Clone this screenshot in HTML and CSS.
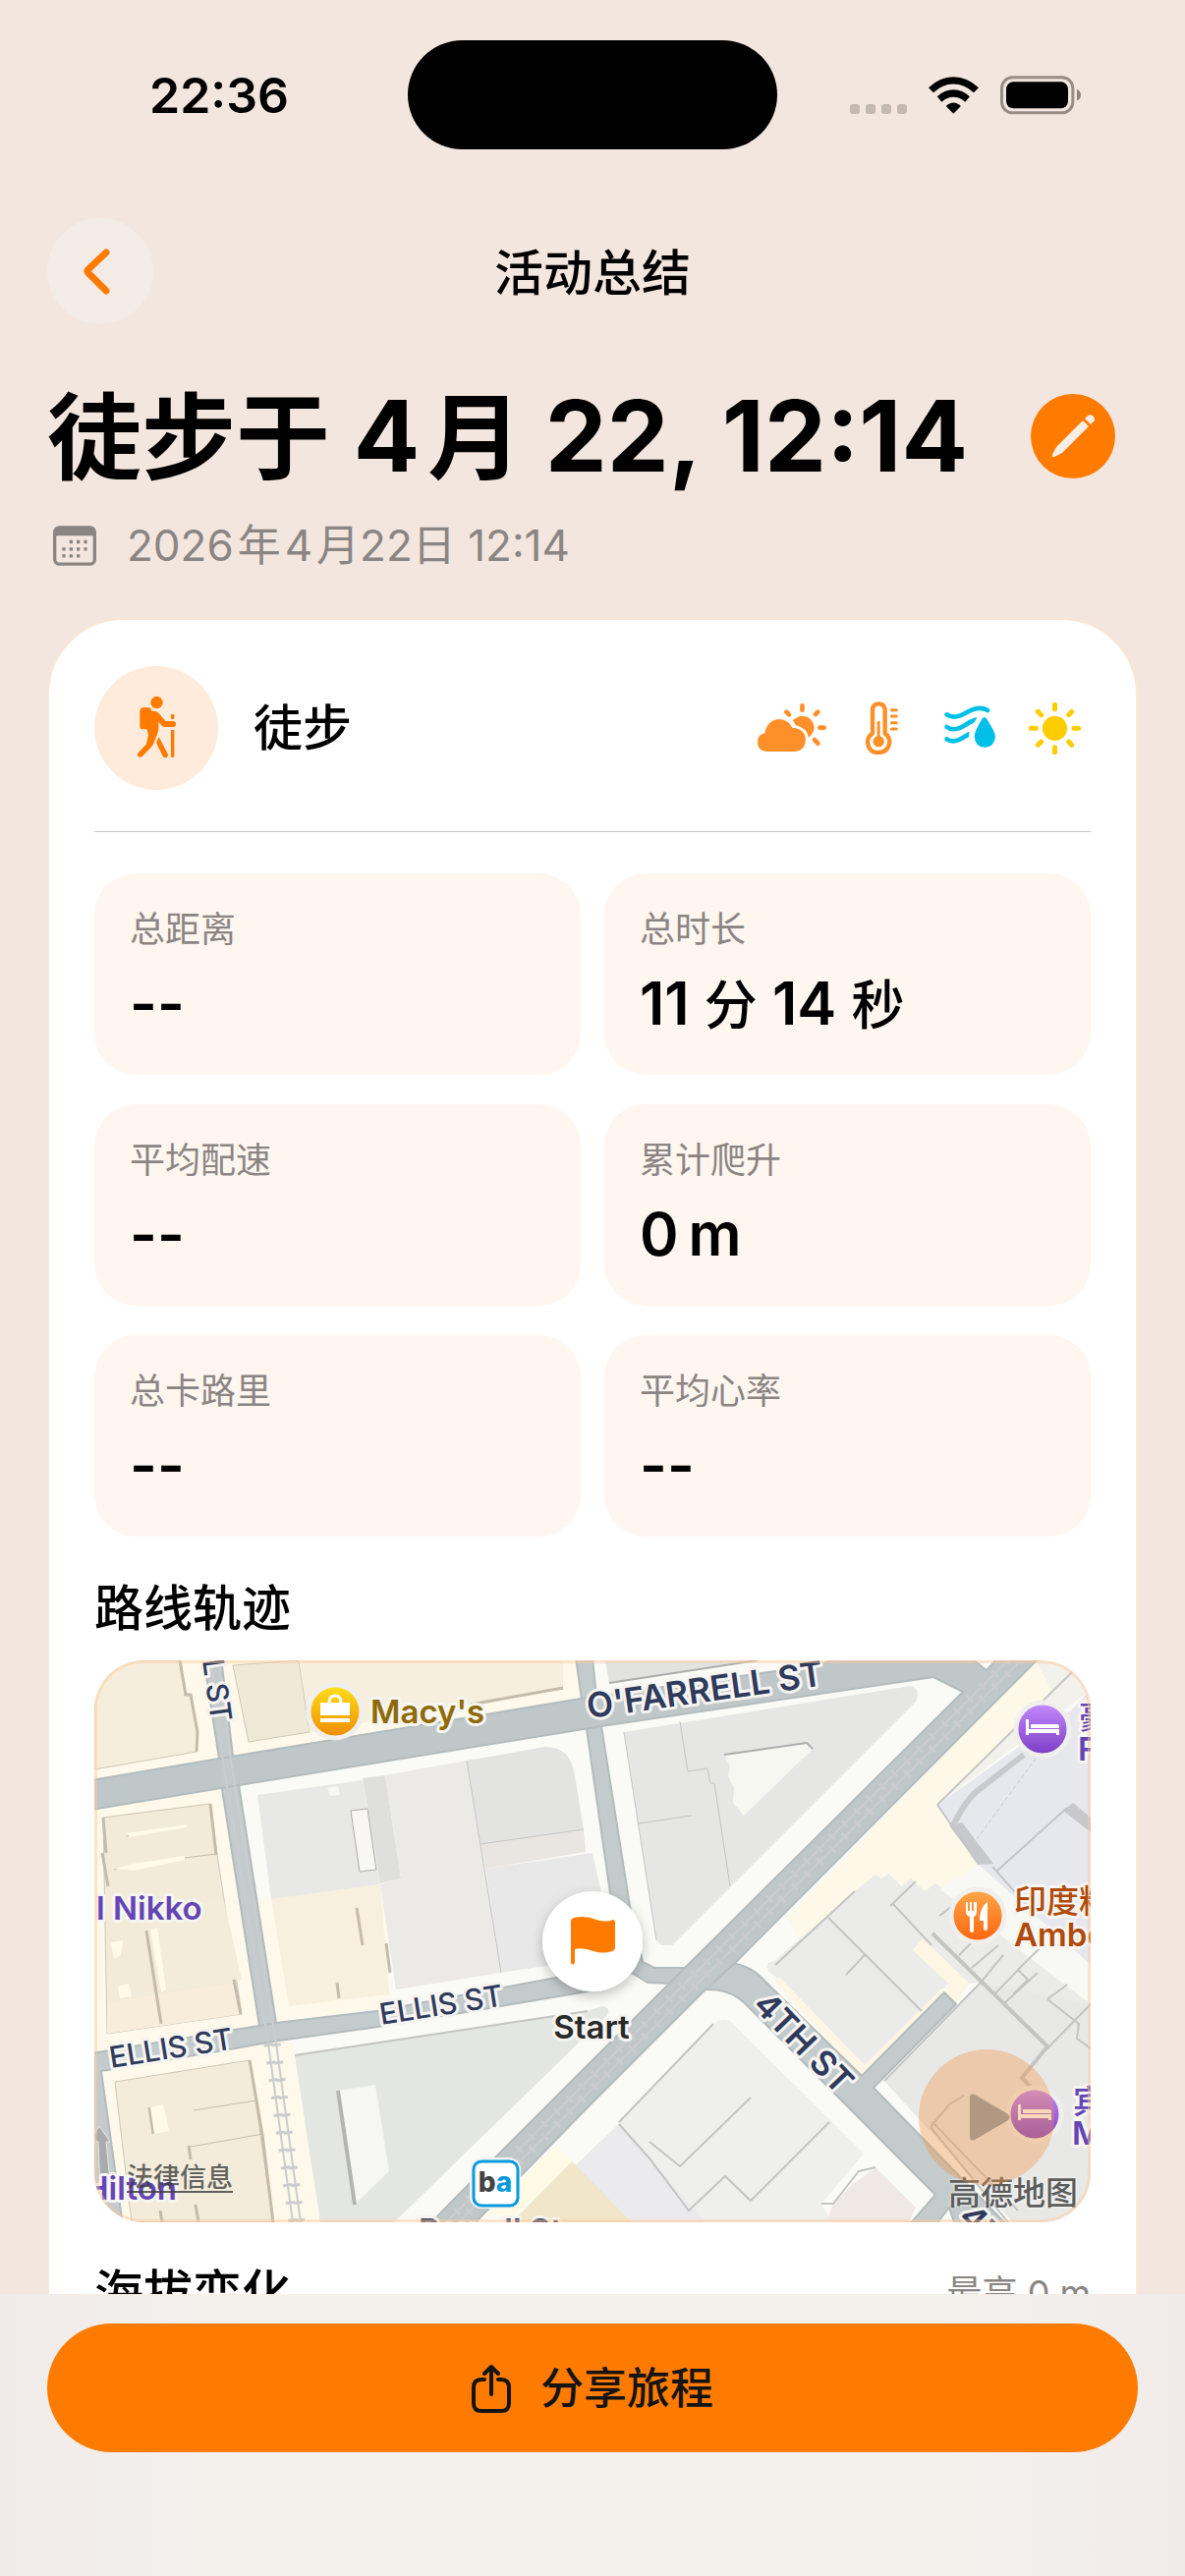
FILE: index.html
```html
<!DOCTYPE html>
<html lang="zh-CN">
<head>
<meta charset="utf-8">
<meta name="viewport" content="width=device-width, initial-scale=1">
<title>活动总结</title>
<link rel="stylesheet" href="styles.css">
</head>
<body>
<div class="app">
  <div class="status">
    <span class="status-time">22:36</span>
    <span class="island"></span>
    <span class="status-icons">
      <svg width="58" height="38" viewBox="0 0 58 38" fill="#c3b9b1"><rect y="28" width="10" height="10" rx="3"/><rect x="16" y="28" width="10" height="10" rx="3"/><rect x="32" y="28" width="10" height="10" rx="3"/><rect x="48" y="28" width="10" height="10" rx="3"/></svg>
      <svg width="51" height="38" viewBox="316 56 152 112"><path d="M316 89Q350 56 391.500 56T468 89L453 104Q425 78 391.500 78T331 104Z"/><path d="M342 116Q364 95 391.500 95T441 116L427 132Q411 117 391.500 117T356 132Z"/><path d="M369 145Q379 134 391.500 134T414 145L391.500 168Z"/></svg>
      <svg width="82" height="40" viewBox="534 53 246 120"><rect x="538.500" y="58.500" width="217" height="108" rx="33" fill="none" stroke="#978c86" stroke-width="9"/><rect x="552" y="72" width="189" height="81" rx="22"/><path d="M768 94Q780 100 780 112T768 129Z" fill="#8d837d"/></svg>
    </span>
  </div>

  <header class="nav">
    <button class="back" aria-label="返回"><svg width="108" height="108" viewBox="0 0 108 108" fill="none" stroke="#ff7b00" stroke-width="7" stroke-linecap="round" stroke-linejoin="round"><path d="M60 35L42 52Q40 54 42 56L60 74"/></svg></button>
    <h2 class="nav-title">活动总结</h2>
  </header>

  <main class="content">
    <div class="title-row">
      <h1><span class="han">徒步于</span> 4&#8202;<span class="han">月</span> 22, 12:14</h1>
      <button class="edit" aria-label="编辑"><svg width="86" height="86" viewBox="0 0 86 86" fill="#fbeee4"><path d="M53 27L59 33L33 59Q31 61 24 64Q21 65 22 62Q25 55 27 53Z"/><path d="M55 25L58 22Q61 20 64 23Q66 26 64 28L61 31Z"/></svg></button>
    </div>
    <div class="date-row">
      <svg width="44" height="41" viewBox="42 463 132 122"><rect x="47" y="468" width="122" height="112" rx="15" fill="none" stroke="#8a8583" stroke-width="10"/><path d="M44 497V484Q44 465 62 465H154Q172 465 172 484V497Q168 493 160 493H56Q48 493 44 497Z" fill="#8a8583"/><g fill="#8a8583"><path d="M92 507h10v10h-10zM114 507h10v10h-10zM136 507h10v10h-10zM70 529h10v10h-10zM92 529h10v10h-10zM114 529h10v10h-10zM136 529h10v10h-10zM70 550h10v10h-10zM92 550h10v10h-10zM114 550h10v10h-10z"/></g></svg>
      <time datetime="2026-04-22T12:14">2026&#8202;年&#8202;4&#8202;月22日 12:14</time>
    </div>

    <section class="card">
      <div class="card-head">
        <span class="avatar"><svg width="126" height="126" viewBox="18 24 378 378" fill="#ff7b00"><circle cx="208.500" cy="135" r="18.500"/><path d="M157 163Q157 150 170 150H182Q190 150 193 158V217H166Q157 217 157 208Z"/><path d="M178 161H200Q208 161 214 167L236 192H259Q267 193 267 201T259 210H234Q229 210 225 206L214 195V217Q213 226 208 238L198 262Q197 266 193 270L164 300Q158 305 152 300T152 289L177 262L183 234L178 215Z"/><path d="M215 240L242 292Q245 300 238 303T227 299L207 258Z"/><rect x="252" y="171" width="10" height="15" rx="4"/><path d="M252 219h10v80q-1 4-5 4t-5-4z"/></svg></span>
        <h3 class="sport">徒步</h3>
        <div class="weather">
          <svg width="72" height="54" viewBox="93 102 216 162" fill="#ff8f28"><path d="M121 255Q93 253 93 226Q94 202 115 199Q122 158 160 156Q188 158 199 182Q236 184 240 217Q239 252 208 255Z"/><path d="M200 160Q214 146 231 146Q262 149 266 181Q265 200 249 212Q244 183 209 174Q205 165 200 160Z"/><g stroke="#ff8f28" stroke-width="14" stroke-linecap="round"><path d="M229.500 115v13M181 134l8 8M277 134l-7 7M283 182h13M267 219l10 11"/></g></svg>
          <svg width="50" height="54" viewBox="411 102 150 162" fill="none" stroke="#ff8f28"><path d="M444 200V126Q446 109 462.500 109T482 126V200Q496 209 496 226Q493 257 462.500 258T429 226Q429 209 444 200Z" stroke-width="13" stroke-linejoin="round"/><circle cx="462.500" cy="224" r="17" fill="#ff8f28" stroke="none"/><path d="M462.500 166v50" stroke-width="9" stroke-linecap="round"/><path d="M502 128h15M502 147h15M502 167h15M502 186h15" stroke-width="9" stroke-linecap="round"/></svg>
          <svg width="52" height="54" viewBox="663 102 156 162" fill="none" stroke="#00c0e8" stroke-width="14" stroke-linecap="round"><path d="M671 142Q694 158 731 136T795 129"/><path d="M671 180Q692 196 727 174Q742 163 758 158"/><path d="M671 217Q692 232 726 209L738 202"/><path d="M785 138C776 142 744 186 744 209Q745 244 770 252" stroke="#fff" stroke-width="12"/><path d="M786 150Q780 150 776 159Q755 194 755 209Q757 241 787 242Q817 240 819 209Q818 194 795 159Q791 150 786 150Z" fill="#00c0e8" stroke="none"/></svg>
          <svg width="54" height="54" viewBox="921 102 162 162"><circle cx="1000.500" cy="184" r="38" fill="#ffcc00"/><path d="M1000.500 112v13M1000.500 242v15M928 184h15M1059 184h14M949 133l10 10M1052 133l-9 10M949 235l10-10M1052 235l-9-10" stroke="#ffcc00" stroke-width="15" stroke-linecap="round"/></svg>
        </div>
      </div>

      <dl class="stats">
        <div class="stat"><dt>总距离</dt><dd>--</dd></div>
        <div class="stat"><dt>总时长</dt><dd>11 <span class="unit">分</span> 14 <span class="unit">秒</span></dd></div>
        <div class="stat"><dt>平均配速</dt><dd>--</dd></div>
        <div class="stat"><dt>累计爬升</dt><dd>0&#8201;m</dd></div>
        <div class="stat"><dt>总卡路里</dt><dd>--</dd></div>
        <div class="stat"><dt>平均心率</dt><dd>--</dd></div>
      </dl>

      <h3 class="section-title">路线轨迹</h3>
      <div class="map">
        <svg class="map-canvas" viewBox="0 0 1014 572" preserveAspectRatio="xMidYMid slice" role="img" aria-label="路线地图">
          <defs>
            <linearGradient id="gold" x2="0" y2="1"><stop stop-color="#ffe01a"/><stop offset="1" stop-color="#ef8a00"/></linearGradient>
            <linearGradient id="violet" x2="0" y2="1"><stop stop-color="#c58bff"/><stop offset="1" stop-color="#7a3cc4"/></linearGradient>
            <linearGradient id="tangerine" x2="0" y2="1"><stop stop-color="#ffa84a"/><stop offset="1" stop-color="#fc6410"/></linearGradient>
            <filter id="lift" x="-50%" y="-50%" width="200%" height="200%"><feDropShadow dx="0" dy="4" stdDeviation="6" flood-opacity=".25"/></filter>
            <g id="bed" fill="#fff"><path d="M-17-9h3v14h-3zM-12-4h27q2 0 2 3v1h-29zM-17 1h34v6h-3v-2h-28v2h-3z"/></g>
          </defs>
          <rect width="1014" height="572" fill="#fafaf6"/>
          <!-- cream pavements -->
          <g fill="#fef9ea">
            <path d="M0 0H111L127 100L0 121ZM129 0H490L496 40L141 97ZM0 152L130 131L168 372L0 400ZM7 418L188 387L202 388L230 572H29ZM164 245L296 226L303 352L185 369Z"/>
            <path d="M957 2L975 30L858 147L900 208L861 233L840 240L808 218L774 235L718 285L705 262Z" fill="#fdf8e7"/>
          </g>
          <!-- buildings -->
          <g fill="#f5eedd" stroke="#cfc6b6" stroke-width="1">
            <path d="M0 0H87L93 35H98L105 73L104 93L0 111Z"/>
            <path d="M141 5L208 0L219 73L157 83Z" fill="#efe9d8"/>
            <path d="M210 0H477V28L277 63L219 73Z" fill="#f6efe0" stroke="none"/>
            <path d="M9 160L118 146L125 198L150 360L13 380Z" fill="#f3ebd9"/>
            <path d="M58 254L132 245L150 325L67 336Z" fill="#f4ecda" stroke="none"/>
            <path d="M13 348L142 328L150 360L13 380Z" fill="#f8ecdb" stroke="none"/>
            <path d="M21 429L158 407L182 572H38Z" fill="#f3ecdb"/>
            <path d="M180 243L291 228L300 340L198 352Z" fill="#f8f0df" stroke="none"/>
          </g>
          <g fill="none" stroke="#c4bbab" stroke-width="3">
            <path d="M87 0L93 35H98L105 73L104 93M383 45L477 28M9 160L12 196M118 146L124 198M8 196L14 230M53 275L68 370M142 325L149 360M267 252L273 290M297 288L301 318M247 328L249 344M158 407L171 483L182 572M56 455L60 482M96 494L98 508M103 554L106 572M67 560L69 572"/>
            <path d="M32 179L92 169M20 213L40 208L92 201L124 197M98 495L172 482M101 458L165 448" stroke-width="1"/>
          </g>
          <g fill="#fffaea"><path d="M20 212L40 207L92 199V203L40 214ZM33 176L94 167V170L36 180ZM17 287L29 285L27 300L20 304ZM24 332L35 329L38 342L26 344ZM57 455L70 452L76 479L61 482ZM57 274L64 272L73 335L68 338Z"/></g>
          <g fill="#e8e8e6">
            <path d="M166 137L273 122L291 228L180 243Z"/>
            <path d="M273 120L296 117L312 222L291 227Z" fill="#dfdfde"/>
            <path d="M261 153L278 151L287 213L270 215Z" fill="#f8f7f3" stroke="#aaa" stroke-width="1"/>
            <path d="M237 130L248 128L250 137L240 138Z" fill="#f8f7f3"/>
            <path d="M296 117L379 102L414 318L307 335L291 228L312 222Z" fill="#ebeae7"/>
            <path d="M379 102L459 88Q485 88 489 117L498 172L393 187Z" fill="#e3e3e2"/>
            <path d="M393 187L498 172L500 195L398 212Z" fill="#e9e5e1"/>
            <path d="M398 212L507 196L530 300L414 318Z" fill="#e8e8e8"/>
            <path d="M520 0H675L524 23Z" fill="#e2e2e0"/>
            <path d="M539 73L831 26Q842 30 836 42L588 290H577L572 285Z" fill="#e6e6e4"/>
            <path d="M641 96L725 84L731 90L661 158L650 145L651 130L645 118L647 108Z" fill="#f7f7f2"/>
            <path d="M204 402L502 357L516 352Q528 354 520 363L305 572H230Z" fill="#e4e6e1"/>
            <path d="M248 438L286 432L300 520L265 554Z" fill="#f6f6f3"/>
            <path d="M686 317Q682 308 692 306L774 235L795 218L801 222L808 217L822 230L831 222L845 235L856 227L902 328L868 330L784 412L693 322Z" fill="#ebebea"/>
            <path d="M804 428L902 328L845 280L856 227L1014 340V572H935Z" fill="#ebebea"/>
            <path d="M804 428L902 328L1014 350V572H935Z" fill="#e8e9e7"/>
            <path d="M534 470L630 370Q636 364 647 367L783 502L740 553L750 572H547L504 530Z" fill="#efefed"/>
            <path d="M504 500L534 472L565 507L622 572H547L504 530L490 514Z" fill="#ebebee"/>
            <path d="M486 510L547 572H425Z" fill="#f1e5ca"/>
            <path d="M470 493L486 510L430 565L400 565Z" fill="#fefae6"/>
            <path d="M795 516L836 557L829 572H745L752 553L770 535Z" fill="#f0e8e5"/>
          </g>
          <!-- shopping centre -->
          <path d="M858 147L995 50L1014 30V310L900 208Z" fill="#e6e8ed"/>
          <path d="M957 0H1014V30L860 145L975 30Z" fill="#f2f1eb"/>
          <path d="M858 147L995 12" stroke="#c6c6c6" stroke-width="2" fill="none"/>
          <path d="M870 168L883 165L915 207L900 208ZM986 153L996 145L1014 160V175Z" fill="#c6c8cb"/>
          <path d="M874 168Q888 140 901 131L946 96" fill="none" stroke="#c9cacd" stroke-width="6"/>
          <path d="M898 182L958 100" stroke="#c6c8cc" stroke-dasharray="4 3"/>
          <path d="M918 215L990 150M914 210L960 262M858 147L900 208" stroke="#c4c5c8" stroke-width="2"/>
          <path d="M900 208L1014 310V350L861 233Z" fill="#f8f8f4"/>
          <path d="M833 295L843 283L890 328L877 348L865 338L870 330Z" fill="#fcf6e2"/>
          <path d="M693 328L781 423L865 338L862 334L784 412L697 322Z" fill="#fdf6e4"/>
          <!-- building outlines -->
          <g fill="none" stroke="#c4c4c2" stroke-width="1">
            <path d="M524 23L675 0M641 96L725 84L731 90" stroke="#adadab" stroke-width="2"/>
            <path d="M596 62L604 113L624 110L627 125H631L647 230M554 166L608 158M393 187L498 172M379 102L414 318M539 73L572 285"/>
            <path d="M248 438L265 554" stroke="#b4b5b1" stroke-width="4"/>
            <path d="M204 402L502 357M534 470L630 370M804 428L902 328M693 310L774 235M747 262L842 357M784 300L765 320M810 250L836 225" stroke-width="2"/>
            <path d="M853 278L970 393L944 425L956 437" stroke-width="4"/>
            <path d="M902 328L925 300M915 341L945 310M925 350L960 318M880 300L905 275M893 313L920 290M935 340L950 325L940 315L965 290M970 345L990 330M965 400L1014 350M970 345L1002 370L1000 385L1014 395M860 260L880 245M812 247L852 290" stroke-width="2"/>
            <path d="M534 472L565 507L605 560L642 525L668 550L748 470M565 490L596 515L668 445" stroke-width="2"/>
            <path d="M851 475L870 452L885 443M851 475L930 572M853 470L940 560M740 553L752 553L778 520L795 516" stroke-width="2"/>
          </g>
          <!-- streets -->
          <g fill="#c4cbcd" stroke="#b2bcbd" stroke-width="2" stroke-linejoin="round">
            <path d="M111 -3H129L141 97L147 127L185 369L168 372L130 131L127 100Z"/>
            <path d="M490 -3H507L511 37L516 67L545 250L558 307L570 313H602L590 329L563 328L547 318L502 337L289 373L188 387L143 395L7 418L29 575H5L-3 530V400L168 372L185 369L287 357L470 323L525 237L501 70L496 40Z"/>
            <path d="M602 312L647 308Q668 310 683 327L781 423L865 338L877 350L793 435L929 575H876L870 557L856 575H829L856 544L661 348Q645 334 622 335L590 329Z"/>
            <path d="M-3 122L127 100L495 39L736 5L760 -3H891L908 10L920 -3H962L652 308L622 335L504 453L385 575H340L411 503L602 312L884 32L854 17L516 67L147 127L-3 152Z" fill="#bfc7c9"/>
            <path d="M128 101L140 99L146 126L131 129ZM600 315L646 309L624 334L592 328Z" stroke="none" fill="#c1c9cb"/>
          </g>
          <!-- tram lines -->
          <g fill="none" stroke="#cbcccd" stroke-width="2">
            <path d="M930 0L360 570M943 0L373 570M119 0L131 103L177 390L202 572M127 0L139 103L185 390L210 572"/>
            <path d="M930 0L360 570M943 0L373 570M177 390L202 572M185 390L210 572" stroke-width="9" stroke-dasharray="3 15"/>
          </g>
          <path d="M5 474L16 490H12L16 530L6 540L4 490H0V482Z" fill="#a9abac" stroke="#e6e6e6"/>
          <!-- street names -->
          <g class="street">
            <text class="street-lg" transform="translate(503 59) rotate(-8)">O'FARRELL ST</text>
            <text transform="translate(17 415) rotate(-9)">ELLIS ST</text>
            <text transform="translate(292 371) rotate(-9)">ELLIS ST</text>
            <text transform="translate(110 0) rotate(82)">L ST</text>
            <text class="street-lg" transform="translate(669 352) rotate(46)">4TH ST</text>
            <text class="street-lg" transform="translate(878 568) rotate(46)">4TH ST</text>
          </g>
          <!-- places -->
          <g class="place">
            <text x="281" y="64" fill="#8f6a08">Macy's</text>
            <text x="2" y="264" fill="#6445b4">l Nikko</text>
            <text x="84" y="549" fill="#6445b4" text-anchor="end">Hilton</text>
            <text class="place-han" x="1002" y="70" fill="#6445b4">豪</text>
            <text x="1001" y="102" fill="#6445b4">F</text>
            <text class="place-han" x="996" y="461" fill="#6445b4">宾</text>
            <text x="995" y="493" fill="#6445b4">M</text>
            <text class="place-han" x="936" y="257" fill="#b04a0c">印度料理</text>
            <text x="936" y="291" fill="#b04a0c">Amber</text>
            <text x="330" y="592" fill="#2f3a5c">Powell St</text>
            <text x="506" y="385" fill="#2a2a2a" text-anchor="middle">Start</text>
          </g>
          <g stroke="#f1efeb" stroke-width="5">
            <circle cx="245" cy="52" r="27" fill="url(#gold)"/>
            <circle cx="965" cy="70" r="27" fill="url(#violet)"/>
            <circle cx="957" cy="462" r="27" fill="url(#violet)"/>
            <circle cx="899" cy="260" r="27" fill="url(#tangerine)"/>
          </g>
          <g fill="#fff"><path d="M230 43H260V56H230ZM230 59H260V63H230Z"/><path d="M239 43Q239 36 245 36T251 43" fill="none" stroke="#fff" stroke-width="3"/></g>
          <use href="#bed" x="965" y="69"/><use href="#bed" x="957" y="461"/>
          <path d="M887 246h2v9h2v-9h2v9h2v-9h3v10q0 4-3 5v14q0 2-2 2t-2-2v-14q-4-1-4-5zM909 246v27q0 2-2 2t-2-2v-8h-4q0-14 8-19z" fill="#fff"/>
          <rect x="382" y="506" width="52" height="52" rx="12" fill="#f4f4f2"/>
          <rect x="386" y="510" width="45" height="45" rx="8" fill="#fff" stroke="#0a9adc" stroke-width="3"/>
          <!-- station badge -->
          <text class="bart" x="408" y="541" text-anchor="middle"><tspan fill="#444">b</tspan><tspan fill="#0a9adc">a</tspan></text>
          <circle cx="507" cy="286" r="51" fill="#fff" filter="url(#lift)"/>
          <path d="M485 265Q485 263 488 262Q500 259 511 264Q521 267 528 264Q530 264 530 267V292Q530 295 527 296Q518 299 508 296Q497 292 489 294V308Q487 311 485 308Z" fill="#ff7b00"/>
        </svg>
        <a class="legal" href="#legal">法律信息</a>
        <span class="provider">高德地图</span>
        <button class="play" aria-label="播放轨迹"><svg width="138" height="138" viewBox="0 0 138 138"><path d="M52 49Q52 44 57 46L91 66Q94 69 91 72L57 92Q52 94 52 89Z" fill="#5f564c" fill-opacity=".42"/></svg></button>
      </div>

      <div class="section-row">
        <h3 class="section-title">海拔变化</h3>
        <span class="peak">最高 0 m</span>
      </div>
    </section>
  </main>

  <footer class="dock">
    <button class="share">
      <svg width="40" height="50" viewBox="0 0 40 50" fill="none" stroke="#141414" stroke-width="4" stroke-linecap="round" stroke-linejoin="round"><path d="M13 16H10Q2 16 2 24V40Q2 48 10 48H30Q38 48 38 40V24Q38 16 30 16H27M20 31V3M13 10L20 3L27 10"/></svg>
      分享旅程
    </button>
  </footer>
</div>
</body>
</html>
```
FILE: styles.css
```css
* { box-sizing: border-box; }

body {
  margin: 0;
  background: #f3e6de;
  color: #000;
  font-family: Inter, "Noto Sans CJK SC", sans-serif;
}

h1, h2, h3, dl, dd { margin: 0; }

button {
  padding: 0;
  border: 0;
  font-family: inherit;
  cursor: pointer;
}

svg { display: block; flex: none; }

.app {
  display: flex;
  flex-direction: column;
  height: 100vh;
}

/* Status bar */
.status {
  display: grid;
  grid-template-columns: 1fr auto 1fr;
  align-items: center;
  flex: none;
  padding: 41px 106px 70px 152px;
}
.status-time {
  font-size: 50px;
  line-height: 60px;
  font-weight: 600;
}
.island {
  width: 376px;
  height: 111px;
  margin-left: -46px;
  border-radius: 56px;
  background: #000;
}
.status-icons {
  display: flex;
  align-items: center;
  justify-content: flex-end;
  gap: 22px;
}

/* Navigation */
.nav {
  display: grid;
  grid-template-columns: 108px 1fr 108px;
  align-items: center;
  flex: none;
  padding: 0 48px;
}
.back {
  width: 108px;
  height: 108px;
  border-radius: 50%;
  background: #f2ebe6;
}
.nav-title {
  padding-top: 4px;
  font-size: 50px;
  line-height: 60px;
  font-weight: 500;
  text-align: center;
}

/* Scrolling content */
.content {
  flex: 1;
  min-height: 0;
  padding: 56px 48px 48px;
  overflow-y: auto;
  scrollbar-width: none;
}
.title-row {
  display: flex;
  align-items: center;
  justify-content: space-between;
  height: 116px;
  padding-right: 23px;
}
h1 {
  font-size: 100px;
  line-height: 116px;
  font-weight: 700;
  white-space: nowrap;
}
.han {
  font-size: 96px;
  line-height: 96px;
}
.edit {
  flex: none;
  width: 86px;
  height: 86px;
  border-radius: 50%;
  background: #ff7b00;
}
.date-row {
  display: flex;
  align-items: center;
  gap: 31px;
  height: 54px;
  margin-top: 26px;
  padding-left: 6px;
  color: #8a8583;
  font-size: 44px;
  line-height: 54px;
}

/* Summary card */
.card {
  margin-top: 47px;
  padding: 47px 46px 60px;
  border: 2px solid #fce6d4;
  border-radius: 78px;
  background: #fff;
}
.card-head {
  display: flex;
  align-items: center;
  padding-bottom: 42px;
  border-bottom: 1px solid #c6c6c8;
}
.avatar {
  border-radius: 50%;
  background: #ffebdb;
}
.sport {
  margin-left: 36px;
  font-size: 50px;
  line-height: 60px;
  font-weight: 500;
}
.weather {
  display: flex;
  gap: 34px;
  margin-left: auto;
  padding-right: 9px;
}
.stats {
  display: grid;
  grid-template-columns: 1fr 1fr;
  gap: 30px 24px;
  margin-top: 42px;
}
.stat {
  padding: 36px 36px 40px;
  border-radius: 42px;
  background: #fff6f0;
}
.stat dt {
  color: #8a8583;
  font-size: 36px;
  line-height: 42px;
}
.stat dd {
  margin-top: 21px;
  font-size: 60px;
  line-height: 66px;
  font-weight: 600;
}
.unit {
  font-size: 54px;
  line-height: 54px;
  font-weight: 500;
}
.section-title {
  margin-top: 43px;
  font-size: 50px;
  line-height: 60px;
  font-weight: 500;
}
.section-row {
  display: flex;
  align-items: center;
  justify-content: space-between;
  margin-top: 42px;
}
.section-row .section-title { margin-top: 0; }
.peak {
  color: #8a8583;
  font-size: 36px;
  line-height: 42px;
}

/* Route map */
.map {
  position: relative;
  margin-top: 23px;
  aspect-ratio: 1014 / 572;
  border-radius: 50px;
  overflow: hidden;
}
.map::after {
  content: "";
  position: absolute;
  inset: 0;
  border: 3px solid rgba(255, 200, 150, 0.45);
  border-radius: 50px;
  pointer-events: none;
}
.map-canvas { width: 100%; height: 100%; }
.map-canvas text {
  paint-order: stroke;
  stroke: #f6f5f1;
  stroke-width: 6px;
  stroke-linejoin: round;
}
.street {
  fill: #2f3a5c;
  font-size: 30px;
  font-weight: 500;
}
.street-lg {
  font-size: 35px;
  font-weight: 600;
}
.place {
  font-size: 33px;
  font-weight: 600;
}
.place-han { font-weight: 500; }
.map-canvas .bart {
  stroke: none;
  font-size: 28px;
  font-weight: 800;
}
.legal {
  position: absolute;
  left: 33px;
  bottom: 24px;
  color: rgba(60, 60, 60, 0.8);
  font-size: 27px;
  line-height: 42px;
  font-weight: 500;
  text-underline-offset: 4px;
}
.provider {
  position: absolute;
  right: 13px;
  bottom: 9px;
  color: #5c5c5c;
  font-size: 33px;
  line-height: 42px;
  font-weight: 500;
  text-shadow: 0 0 3px #fff;
}
.play {
  position: absolute;
  right: 37px;
  bottom: 38px;
  width: 138px;
  height: 138px;
  border-radius: 50%;
  background: rgba(240, 150, 70, 0.38);
}

/* Bottom action */
.dock {
  flex: none;
  padding: 30px 48px 126px;
  background: linear-gradient(90deg, #f0ebe8, #f4f1ed 20%, #f4f1ed 80%, #f0ebe8);
}
.share {
  display: flex;
  align-items: center;
  justify-content: center;
  gap: 30px;
  width: 100%;
  height: 131px;
  border-radius: 66px;
  background: #ff7b00;
  color: #141414;
  font-size: 44px;
  line-height: 54px;
  font-weight: 500;
}
```
